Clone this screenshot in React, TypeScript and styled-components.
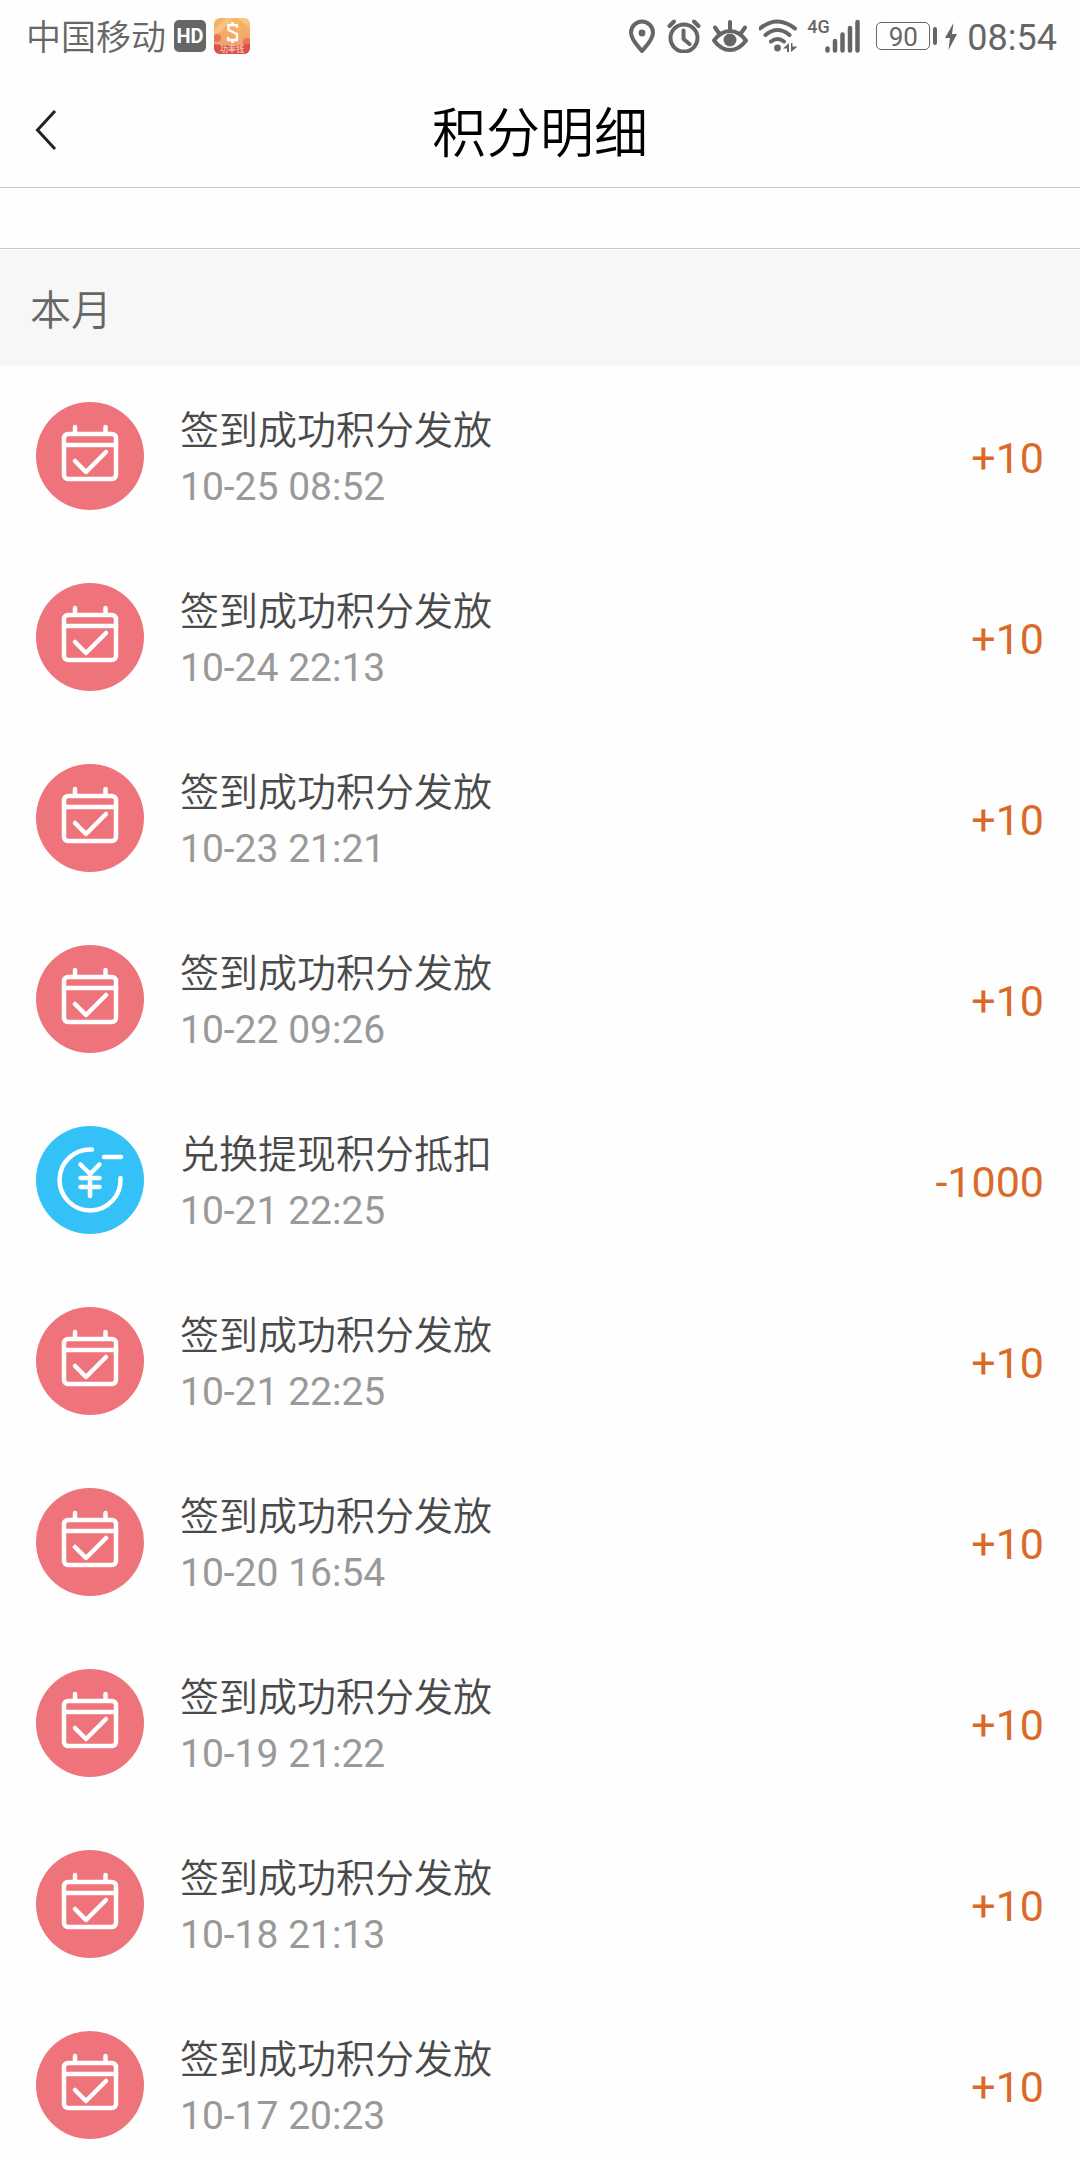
import React from "react";
import styled, { createGlobalStyle } from "styled-components";

const GlobalStyle = createGlobalStyle`
  *, *::before, *::after { box-sizing: border-box; }
  body {
    margin: 0;
    background: #fefefe;
    font-family: Roboto, "Noto Sans CJK SC", sans-serif;
    font-weight: 400;
  }
  h1, h2, p, ul { margin: 0; padding: 0; font-weight: 400; }
`;

const Page = styled.div`
  width: 100%;
  height: 100vh;
  overflow: hidden;
`;

const StatusBar = styled.div`
  display: flex;
  justify-content: space-between;
  align-items: center;
  height: 72px;
  padding: 0 23px 0 26px;
  color: #666;
`;

const StatusGroup = styled.div<{ $gap: number }>`
  display: flex;
  align-items: center;
  gap: ${(p) => p.$gap}px;
`;

const StatusText = styled.span`
  padding-top: 3px;
  font-size: 36px;
  line-height: 48px;
`;

const Carrier = styled(StatusText)`
  padding-top: 6px;
  font-size: 35px;
  font-weight: 350;
`;

const HdBadge = styled.span`
  display: flex;
  align-items: center;
  justify-content: center;
  width: 32px;
  height: 32px;
  border-radius: 5px;
  background: #666;
  color: #fff;
  font-size: 20px;
  font-weight: 700;
  line-height: 32px;
`;

const StatusIcon = styled.svg`
  display: block;
  flex: none;
  fill: none;
  stroke: #666;
  stroke-width: 4;
  stroke-linecap: round;
  stroke-linejoin: round;
`;

const Cellular = styled.div`
  display: flex;
  align-items: flex-start;
  height: 34px;
`;

const NetworkType = styled.span`
  width: 18px;
  font-size: 18px;
  font-weight: 500;
  line-height: 16px;
`;

const Power = styled.div`
  display: flex;
  align-items: center;
  margin-left: 5px;
`;

const BatteryBody = styled.span`
  width: 54px;
  height: 28px;
  border: 1px solid #666;
  border-radius: 5px;
  font-size: 26px;
  line-height: 28px;
  text-align: center;
`;

const BatteryCap = styled.span`
  width: 4px;
  height: 18px;
  margin: 0 8px 0 3px;
  border-radius: 2px;
  background: #666;
`;

const Header = styled.header`
  display: grid;
  grid-template-columns: 96px 1fr 96px;
  align-items: center;
  height: 116px;
  border-bottom: 1px solid #c8c8c8;
`;

const BackButton = styled.button`
  display: flex;
  align-items: center;
  height: 96px;
  padding: 0 0 0 34px;
  border: 0;
  background: none;
`;

const Title = styled.h1`
  padding-top: 10px;
  color: #000;
  font-size: 54px;
  font-weight: 350;
  line-height: 72px;
  text-align: center;
`;

const Spacer = styled.div`
  height: 61px;
  border-bottom: 1px solid #c8c8c8;
`;

const SectionTitle = styled.h2`
  padding: 32px 30px 25px;
  background: #f7f7f7;
  color: #666;
  font-size: 41px;
  font-weight: 350;
  line-height: 60px;
`;

const RecordList = styled.ul`
  list-style: none;
`;

const Record = styled.li`
  display: flex;
  align-items: flex-start;
  gap: 36px;
  height: 181px;
  padding: 36px;
`;

const RecordIcon = styled.svg`
  display: block;
  flex: none;
  width: 108px;
  height: 108px;
  fill: none;
  stroke: #fff;
  stroke-width: 4.5;
  stroke-linecap: round;
  stroke-linejoin: round;
`;

const RecordText = styled.div`
  flex: 1;
  min-width: 0;
`;

const RecordTitle = styled.p`
  color: #4a4a4a;
  font-size: 39px;
  font-weight: 350;
  line-height: 58px;
`;

const RecordTime = styled.time`
  display: block;
  color: #999;
  font-size: 39px;
  line-height: 54px;
`;

const Amount = styled.span`
  color: #d96a28;
  font-size: 43px;
  line-height: 112px;
`;

const AppLogo = () => (
  <svg width="36" height="36" viewBox="0 0 36 36" role="img" aria-label="App">
    <defs>
      <linearGradient id="logo" x1="0" y1="0" x2="0" y2="1">
        <stop offset="0" stopColor="#f5b866" />
        <stop offset="1" stopColor="#f29a68" />
      </linearGradient>
      <clipPath id="logoClip">
        <rect width="36" height="36" rx="6" />
      </clipPath>
    </defs>
    <g clipPath="url(#logoClip)">
      <rect width="36" height="36" fill="url(#logo)" />
      <path d="M0 12 12 0h8L0 20zM24 0h12v10z" fill="#f9cf96" opacity=".6" />
      <circle cx="3" cy="20" r="4" fill="#e9745c" />
      <circle cx="33" cy="24" r="4" fill="#e9745c" />
      <path d="M0 26q18 3 36 0v10H0z" fill="#d9514a" />
      <path
        d="M23 10V7h-8.500v5L23 16v6h-9v-3M18.500 4v3M18.500 22v3"
        fill="none"
        stroke="#fff"
        strokeWidth="2.400"
        strokeLinejoin="round"
      />
      <text x="18" y="34" fill="#fbe3d8" fontSize="8" textAnchor="middle">
        功率钱
      </text>
    </g>
  </svg>
);

const PinIcon = () => (
  <StatusIcon width="30" height="34" viewBox="0 0 30 34">
    <path d="M15 32C11 27 4 21 4 13.500a11 11 0 0 1 22 0C26 21 19 27 15 32z" />
    <circle cx="15" cy="14" r="3.400" fill="#666" stroke="none" />
  </StatusIcon>
);

const AlarmIcon = () => (
  <StatusIcon width="34" height="34" viewBox="0 0 34 34">
    <circle cx="17" cy="19" r="13.500" />
    <path d="M2.500 7 7 2.500M31.500 7 27 2.500M16.500 11.500V20l6 5" />
  </StatusIcon>
);

const EyeIcon = () => (
  <StatusIcon width="38" height="34" viewBox="0 0 38 34">
    <path d="M3 21.500Q10 12 19 12t16 9.500Q28 31 19 31T3 21.500z" />
    <path d="M19 10V3M7.500 13.500 4 8.500M30.500 13.500 34 8.500" />
    <circle cx="19" cy="21" r="6.500" fill="#666" stroke="none" />
  </StatusIcon>
);

const WifiIcon = () => (
  <StatusIcon width="38" height="34" viewBox="0 0 38 34">
    <path d="M1 9.500q17.500-14 35 0M6.500 16q12-10 24 0M12 22.500q6.500-5 13 0" />
    <circle cx="18.500" cy="29" r="3.400" fill="#666" stroke="none" />
    <path d="M24 29.500l6-5.500v9h-2v-3.500zM32 33v-9h1.500v3.500h5z" fill="#666" stroke="none" />
  </StatusIcon>
);

const SignalIcon = () => (
  <StatusIcon width="36" height="34" viewBox="0 0 36 34">
    <path d="M2.500 31.500v-2M10 31.500v-9.500M17.500 31.500V15.500M25 31.500V9M32.500 31.500V3" strokeWidth="4.500" />
  </StatusIcon>
);

const BoltIcon = () => (
  <StatusIcon width="12" height="27" viewBox="0 0 12 27">
    <path d="M8.500 0 0 15h5L3.500 27 12 11H7z" fill="#666" stroke="none" />
  </StatusIcon>
);

const CheckInIcon = () => (
  <RecordIcon viewBox="0 0 108 108" aria-hidden="true">
    <circle cx="54" cy="54" r="54" fill="#ee737b" stroke="none" />
    <rect x="28" y="32" width="52" height="45" rx="4" />
    <path d="M28 43h52M39 31v-6M69.500 31v-6M39 59l11 11 20-20" />
  </RecordIcon>
);

const WithdrawIcon = () => (
  <RecordIcon viewBox="0 0 108 108" aria-hidden="true">
    <circle cx="54" cy="54" r="54" fill="#33c1f8" stroke="none" />
    <path d="M56 23.500A30.500 30.500 0 1 0 84.500 52M68 31h17" />
    <path d="M44.500 38.500 54 48l9.500-9.500M54 48v22M44.500 52h19M44.500 61h19" />
  </RecordIcon>
);

type Entry = { kind: "checkin" | "withdraw"; time: string; amount: string };

const entries: Entry[] = [
  { kind: "checkin", time: "10-25 08:52", amount: "+10" },
  { kind: "checkin", time: "10-24 22:13", amount: "+10" },
  { kind: "checkin", time: "10-23 21:21", amount: "+10" },
  { kind: "checkin", time: "10-22 09:26", amount: "+10" },
  { kind: "withdraw", time: "10-21 22:25", amount: "-1000" },
  { kind: "checkin", time: "10-21 22:25", amount: "+10" },
  { kind: "checkin", time: "10-20 16:54", amount: "+10" },
  { kind: "checkin", time: "10-19 21:22", amount: "+10" },
  { kind: "checkin", time: "10-18 21:13", amount: "+10" },
  { kind: "checkin", time: "10-17 20:23", amount: "+10" },
];

const titles = { checkin: "签到成功积分发放", withdraw: "兑换提现积分抵扣" };

export default function App() {
  return (
    <Page lang="zh-CN">
      <GlobalStyle />
      <StatusBar>
        <StatusGroup $gap={8}>
          <Carrier>中国移动</Carrier>
          <HdBadge>HD</HdBadge>
          <AppLogo />
        </StatusGroup>
        <StatusGroup $gap={10}>
          <PinIcon />
          <AlarmIcon />
          <EyeIcon />
          <WifiIcon />
          <Cellular>
            <NetworkType>4G</NetworkType>
            <SignalIcon />
          </Cellular>
          <Power>
            <BatteryBody>90</BatteryBody>
            <BatteryCap />
            <BoltIcon />
          </Power>
          <StatusText>08:54</StatusText>
        </StatusGroup>
      </StatusBar>
      <Header>
        <BackButton type="button" aria-label="返回">
          <svg width="24" height="40" viewBox="0 0 24 40" fill="none" stroke="#222" strokeWidth="3">
            <path d="M21 1 3.500 20 21 39" />
          </svg>
        </BackButton>
        <Title>积分明细</Title>
      </Header>
      <main>
        <Spacer />
        <SectionTitle>本月</SectionTitle>
        <RecordList>
          {entries.map((e) => (
            <Record key={e.kind + e.time}>
              {e.kind === "checkin" ? <CheckInIcon /> : <WithdrawIcon />}
              <RecordText>
                <RecordTitle>{titles[e.kind]}</RecordTitle>
                <RecordTime>{e.time}</RecordTime>
              </RecordText>
              <Amount>{e.amount}</Amount>
            </Record>
          ))}
        </RecordList>
      </main>
    </Page>
  );
}
